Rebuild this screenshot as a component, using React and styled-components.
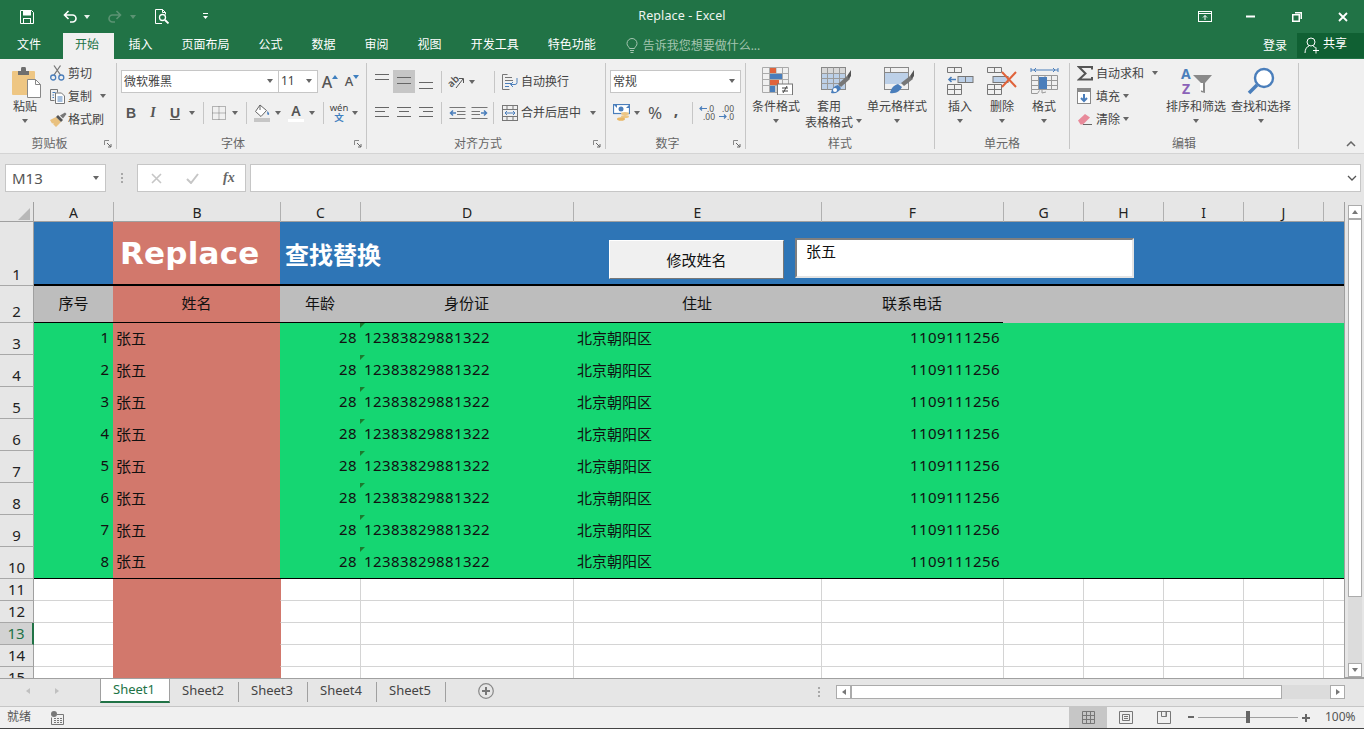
import React from 'react';
import styled, { createGlobalStyle } from 'styled-components';

const GlobalStyle = createGlobalStyle`
  html, body { margin: 0; padding: 0; overflow: hidden; }
  body { font-family: "Noto Sans", "Noto Sans CJK SC", sans-serif; font-size: 12px; color: #444; }
`;

const App_ = styled.div`
  width: 1364px;
  height: 729px;
  display: flex;
  flex-direction: column;
  overflow: hidden;
`;

// Barra de título
const TitleBar = styled.div`
  height: 33px;
  background: #217346;
  display: grid;
  grid-template-columns: 1fr auto 1fr;
  align-items: center;
  color: #fff;
`;
const Qat = styled.div`display: flex; align-items: center; padding-left: 20px;`;
const QatSlot = styled.div`
  width: ${p => p.$w}px;
  margin-left: ${p => p.$ml || 0}px;
  display: flex;
  align-items: center;
`;
const WhiteCaret = styled.span`
  width: 0; height: 0;
  border: 3.5px solid transparent;
  border-top: 4px solid ${p => p.$dim ? '#5b9373' : '#e8f0eb'};
  border-bottom: 0;
`;
const Title = styled.div`font-size: 12.5px; color: #eef4f0; letter-spacing: 0.1px; padding-bottom: 2px;`;
const WinButtons = styled.div`display: flex; justify-content: flex-end; align-items: center; margin-right: -1.5px;`;
const WinSlot = styled.div`
  width: ${p => p.$w}px;
  display: flex;
  justify-content: center;
`;

// Abas
const TabStrip = styled.div`
  height: 26px;
  background: #217346;
  display: flex;
  align-items: stretch;
  color: #fff;
  font-size: 12px;
  padding-left: 2.5px;
`;
const RibbonTab = styled.div`
  padding: ${p => p.$active ? '0 15px 0 12px' : '0 14.5px'};
  margin-left: ${p => p.$active ? '7.5px' : 0};
  background: ${p => p.$active ? '#f0f0f0' : 'transparent'};
  color: ${p => p.$active ? '#217346' : '#fff'};
  line-height: 24px;
`;
const TellMe = styled.div`
  display: flex;
  align-items: center;
  gap: 5px;
  margin: 0 0 2px 15.5px;
  color: #a4c5b0;
`;
const SignIn = styled.div`margin-left: auto; margin-right: 10px; line-height: 25px;`;
const Share = styled.div`
  width: 67px;
  height: 25px;
  background: #106033;
  display: flex;
  align-items: center;
  gap: 3px;
  padding-left: 7px;
  box-sizing: border-box;
  & span { padding-bottom: 5px; }
`;

// Faixa de opções
const Ribbon = styled.div`
  height: 95px;
  box-sizing: border-box;
  background: #f0f0f0;
  border-bottom: 1px solid #d4d4d4;
  display: flex;
  padding-top: 4px;
  position: relative;
`;
const Group = styled.div`
  width: ${p => p.$w}px;
  height: 86px;
  box-sizing: border-box;
  border-right: 1px solid #c6c6c6;
  position: relative;
  display: flex;
  flex-direction: column;
`;
const GroupBody = styled.div`
  height: 72px;
  display: flex;
  padding-left: ${p => p.$pl || 0}px;
`;
const Stack = styled.div`
  display: flex;
  flex-direction: column;
  padding-top: 7px;
  gap: 8px;
`;
const GroupLabel = styled.div`
  height: 14px;
  line-height: 18px;
  text-align: center;
  color: #666;
  padding-right: ${p => p.$pr || 0}px;
`;
const Launcher = styled.div`
  position: absolute;
  right: 4px;
  bottom: 1px;
  line-height: 0;
`;
const Collapse = styled.div`
  position: absolute;
  left: 1346px;
  top: 82px;
  line-height: 0;
`;
const ToolRow = styled.div`
  height: 23px;
  display: flex;
  align-items: center;
`;
const Slot = styled.div`
  width: ${p => p.$w}px;
  height: ${p => p.$h || 23}px;
  flex: none;
  display: flex;
  align-items: center;
  justify-content: center;
  background: ${p => p.$on ? '#c6c6c6' : 'transparent'};
`;
const Sep = styled.div`
  width: 1px;
  height: 22px;
  flex: none;
  background: #c6c6c6;
  margin: 0 ${p => p.$mr}px 0 ${p => p.$ml}px;
`;
const Caret = styled.span`
  display: inline-block;
  flex: none;
  width: 0; height: 0;
  border: 3.5px solid transparent;
  border-top: 4px solid #666;
  border-bottom: 0;
  margin-left: ${p => p.$ml || 0}px;
`;
const Combo = styled.div`
  width: ${p => p.$w}px;
  height: 23px;
  box-sizing: border-box;
  background: #fff;
  border: 1px solid #c6c6c6;
  margin-left: ${p => p.$ml || 0}px;
  padding: 0 5px 2px 2px;
  display: flex;
  align-items: center;
  justify-content: space-between;
`;
const BigButton = styled.div`
  width: ${p => p.$w}px;
  margin-left: ${p => p.$ml || 0}px;
  flex: none;
  display: flex;
  flex-direction: column;
  align-items: center;
  position: relative;
`;
const BigIcon = styled.div`
  height: 32px;
  padding-top: 4px;
  line-height: 0;
  margin-left: ${p => p.$ml || 0}px;
`;
const BigText = styled.div`line-height: 16px; height: 16px; white-space: nowrap;`;
const BigCaret = styled.div`height: 16px; margin-top: -2px; display: flex; align-items: center;`;
const SideCaret = styled.span`position: absolute; left: 51.5px; top: 56px; line-height: 0;`;
const SmallCol = styled.div`
  display: flex;
  flex-direction: column;
  margin-top: -1.5px;
  padding-left: ${p => p.$pl || 0}px;
  width: ${p => p.$w}px;
  box-sizing: border-box;
`;
const SmallItem = styled.div`height: 23px; display: flex; align-items: center;`;
const SmallIcon = styled.div`
  width: ${p => p.$w || 18}px;
  flex: none;
  line-height: 0;
`;
const ToolText = styled.span`white-space: nowrap; padding-bottom: 2px; margin-left: ${p => p.$ml || 0}px;`;
const StyleLetter = styled.span`
  font-family: ${p => p.$i ? '"Liberation Serif", serif' : '"Liberation Sans", sans-serif'};
  font-style: ${p => p.$i ? 'italic' : 'normal'};
  font-weight: 700;
  font-size: 14px;
  text-decoration: ${p => p.$u ? 'underline' : 'none'};
  color: #555;
`;
const BigA = styled.span`font-size: ${p => p.$s}px; font-weight: 500; color: #555; line-height: 1;`;
const GrowMark = styled.span`
  width: 0; height: 0;
  margin: -10px 0 0 0;
  border: 3px solid transparent;
  ${p => p.$down ? 'border-top: 4px solid #3f7fbf; border-bottom: 0;' : 'border-bottom: 4px solid #3f7fbf; border-top: 0;'}
`;
const FontColorA = styled.div`
  width: 16px;
  text-align: center;
  font-size: 14px;
  font-weight: 600;
  line-height: 16px;
  color: #555;
  border-bottom: 3px solid #fff;
`;
const Pinyin = styled.div`
  display: flex;
  flex-direction: column;
  align-items: center;
  font-size: 9.5px;
  line-height: 10px;
  color: #444;
  & b { color: #3f7fbf; font-weight: 700; }
`;
const Percent = styled.span`font-size: 17px; color: #555;`;
const Comma = styled.span`font-size: 16px; font-weight: 700; color: #555; margin-top: -6px;`;

// Barra de fórmulas
const FormulaBar = styled.div`
  height: 48px;
  box-sizing: border-box;
  background: #e6e6e6;
  padding: 10px 3px 10px 5px;
  display: flex;
`;
const NameBox = styled.div`
  width: 101px;
  height: 28px;
  box-sizing: border-box;
  background: #fff;
  border: 1px solid #c6c6c6;
  display: flex;
  align-items: center;
  justify-content: space-between;
  padding: 0 6px;
  font-size: 15px;
  color: #555;
`;
const Dots = styled.div`
  width: ${p => p.$w}px;
  display: flex;
  flex-direction: column;
  align-items: center;
  justify-content: center;
  gap: 2px;
  & i { width: 2px; height: 2px; background: #a8a8a8; }
`;
const SheetDots = styled(Dots)`
  height: 14px;
  margin: 6px 15px 0 auto;
`;
const FxBox = styled.div`
  width: 109px;
  height: 28px;
  box-sizing: border-box;
  background: #fff;
  border: 1px solid #c6c6c6;
  display: flex;
  align-items: center;
  padding-left: 13px;
  gap: 24px;
`;
const Fx = styled.span`
  font-family: "Liberation Serif", serif;
  font-style: italic;
  font-weight: 700;
  font-size: 14px;
  color: #666;
`;
const FormulaInput = styled.div`
  flex: 1;
  height: 28px;
  margin-left: 4px;
  box-sizing: border-box;
  background: #fff;
  border: 1px solid #c6c6c6;
  display: flex;
  align-items: center;
  justify-content: flex-end;
  padding-right: 3px;
`;

// Planilha
const COLS = '34px 79px 167px 80px 213px 248px 182px 80px 80px 80px 80px 21px';
const Main = styled.div`
  height: 476px;
  display: flex;
  background: #e6e6e6;
`;
const Sheet = styled.div`
  width: 1344px;
  height: 476px;
  overflow: hidden;
  position: relative;
`;
const HeaderRow = styled.div`
  display: grid;
  grid-template-columns: ${COLS};
  height: 20px;
  box-sizing: border-box;
  border-bottom: 1px solid #a0a0a0;
  background: #e6e6e6;
`;
const Corner = styled.div`
  position: relative;
  border-right: 1px solid #a0a0a0;
  &::after {
    content: '';
    position: absolute;
    right: 3px;
    bottom: 3px;
    border-left: 12px solid transparent;
    border-bottom: 12px solid #b8b8b8;
  }
`;
const ColHead = styled.div`
  text-align: center;
  font-size: 14px;
  line-height: 21px;
  color: #222;
  border-left: ${p => p.$first ? 0 : '1px solid #b0b0b0'};
`;
const Row = styled.div`
  display: grid;
  grid-template-columns: ${COLS};
  grid-template-rows: minmax(0, 1fr);
  height: ${p => p.$h}px;
  box-sizing: border-box;
  position: relative;
`;
const RowHead = styled.div`
  background: ${p => p.$sel ? '#d2d2d2' : '#e6e6e6'};
  color: ${p => p.$sel ? '#217346' : '#222'};
  border-right: ${p => p.$sel ? '2px solid #217346' : '1px solid #a0a0a0'};
  border-bottom: 1px solid #a8a8a8;
  box-sizing: border-box;
  display: flex;
  align-items: flex-end;
  justify-content: center;
  font-size: 15px;
  line-height: 21px;
`;
const Cell = styled.div`
  background: ${p => p.$bg};
  color: #111;
  font-size: 15px;
  display: flex;
  align-items: center;
  white-space: nowrap;
  box-sizing: border-box;
  justify-content: ${p => p.$right ? 'flex-end' : p.$center ? 'center' : 'flex-start'};
  padding-left: ${p => p.$right || p.$center ? 0 : p.$pl || 3}px;
  padding-right: ${p => p.$right ? p.$pr || 3 : 0}px;
  padding-bottom: ${p => p.$pb ?? 4}px;
  letter-spacing: ${p => p.$num ? '0.42px' : 0};
  border-bottom: ${p => p.$line ? `${p.$line}px solid #000` : 0};
  position: relative;
`;
const TextCell = styled(Cell)`
  &::before {
    content: '';
    position: absolute;
    left: 0;
    top: 0;
    border-right: 5px solid transparent;
    border-top: 5px solid #1c7a2e;
  }
`;
const GridCell = styled.div`
  background: ${p => p.$bg || '#fff'};
  border-left: ${p => p.$edge ? `1px solid ${p.$edge}` : 0};
  border-bottom: ${p => p.$bg ? 0 : '1px solid #d4d4d4'};
  box-sizing: border-box;
`;
const BigTitle = styled.span`
  font-family: "DejaVu Sans", sans-serif;
  font-weight: 700;
  font-size: 31px;
  letter-spacing: 0.2px;
  margin-left: -1px;
  color: #fff;
`;
const SubTitle = styled.span`
  font-family: "Liberation Sans", "Noto Sans CJK SC", sans-serif;
  font-weight: 700;
  font-size: 24px;
  color: #fff;
  position: relative;
  z-index: 1;
`;
const ControlButton = styled.div`
  position: absolute;
  left: 609px;
  top: 18px;
  width: 175px;
  height: 39px;
  box-sizing: border-box;
  background: #f0f0f0;
  border: 1px solid;
  border-color: #fff #777 #777 #fff;
  display: flex;
  align-items: center;
  justify-content: center;
  font-size: 15px;
  color: #111;
`;
const ControlInput = styled.div`
  position: absolute;
  left: 795px;
  top: 16px;
  width: 339px;
  height: 40px;
  box-sizing: border-box;
  background: #fff;
  border: 2px solid;
  border-color: #7f7f7f #e4e4e4 #e4e4e4 #7f7f7f;
  padding: 0 0 0 9px;
  font-size: 15px;
  color: #111;
`;

// Barra de rolagem vertical
const VScroll = styled.div`
  width: 20px;
  box-sizing: border-box;
  border-left: 1px solid #a0a0a0;
  border-bottom: 1px solid #a0a0a0;
  display: flex;
  flex-direction: column;
  align-items: center;
  padding-top: 3px;
`;
const ScrollTrack = styled.div`
  width: 14px;
  flex: 1;
  background: #dcdcdc;
  display: flex;
  flex-direction: column;
`;
const ScrollBtn = styled.div`
  width: ${p => p.$w || 14}px;
  height: ${p => p.$h || 14}px;
  flex: none;
  box-sizing: border-box;
  background: #fff;
  border: 1px solid #ababab;
  display: flex;
  align-items: center;
  justify-content: center;
`;
const VThumb = styled.div`
  height: 378px;
  box-sizing: border-box;
  background: #fff;
  border: 1px solid #ababab;
  margin-bottom: auto;
`;
const Tri = styled.span`
  width: 0; height: 0;
  border: ${p => p.$s || 3.5}px solid transparent;
  ${p => p.$dir === 'up' && `border-bottom: 4px solid ${p.$c || '#777'}; border-top: 0;`}
  ${p => p.$dir === 'down' && `border-top: 4px solid ${p.$c || '#777'}; border-bottom: 0;`}
  ${p => p.$dir === 'left' && `border-right: 4px solid ${p.$c || '#777'}; border-left: 0;`}
  ${p => p.$dir === 'right' && `border-left: 4px solid ${p.$c || '#777'}; border-right: 0;`}
`;

// Abas das planilhas
const SheetBar = styled.div`
  height: 28px;
  box-sizing: border-box;
  background: #e6e6e6;
  border-top: 1px solid #a0a0a0;
  display: flex;
  align-items: flex-start;
`;
const SheetNav = styled.div`
  width: 100px;
  height: 23px;
  display: flex;
  align-items: center;
  padding-left: 26px;
  gap: 25px;
  box-sizing: border-box;
`;
const SheetTab = styled.div`
  width: ${p => p.$active ? 70 : 69}px;
  height: ${p => p.$active ? 24 : 20}px;
  margin-top: ${p => p.$active ? 0 : 3}px;
  padding-right: 2px;
  box-sizing: border-box;
  background: ${p => p.$active ? '#fff' : 'transparent'};
  color: ${p => p.$active ? '#217346' : '#444'};
  border-left: ${p => p.$active ? '1px solid #a0a0a0' : 0};
  border-right: 1px solid #a0a0a0;
  border-bottom: ${p => p.$active ? '2px solid #217346' : 0};
  text-align: center;
  font-size: 13px;
  line-height: ${p => p.$active ? 21 : 16}px;
`;
const AddSheet = styled.div`margin: 4px 0 0 32px; line-height: 0;`;
const HScroll = styled.div`
  width: 509px;
  height: 14px;
  margin: 6px 19px 0 0;
  background: #dcdcdc;
  display: flex;
`;
const HThumb = styled.div`
  width: 431px;
  box-sizing: border-box;
  background: #fff;
  border: 1px solid #ababab;
  margin-right: auto;
`;

// Barra de status
const StatusBar = styled.div`
  height: 23px;
  box-sizing: border-box;
  background: #f0f0f0;
  border-top: 1px solid #c6c6c6;
  border-bottom: 1px solid #444;
  display: flex;
  align-items: stretch;
  padding-left: 7px;
  color: #555;
`;
const StatusText = styled.div`line-height: 20px;`;
const MacroSlot = styled.div`
  margin-left: 20px;
  display: flex;
  align-items: center;
`;
const StatusRight = styled.div`margin-left: auto; display: flex; align-items: stretch;`;
const ViewBtn = styled.div`
  width: 38px;
  display: flex;
  align-items: center;
  justify-content: center;
  background: ${p => p.$on ? '#c6c6c6' : 'transparent'};
`;
const Zoom = styled.div`
  display: flex;
  align-items: center;
  margin-left: 5px;
`;
const Slider = styled.div`
  width: 100px;
  height: 1px;
  margin: 0 4px;
  background: #a0a0a0;
  position: relative;
  &::after {
    content: '';
    position: absolute;
    left: 48px;
    top: -6px;
    width: 4px;
    height: 12px;
    background: #666;
  }
`;
const ZoomValue = styled.div`width: 32px; margin: 0 7px 0 15px; line-height: 20px;`;

// Ícones
const Svg = ({ w, h, children, ...rest }) => (
  <svg width={w} height={h} viewBox={`0 0 ${w} ${h}`} fill="none" {...rest}>{children}</svg>
);
const BLUE = '#4a7ebb';
const LB = '#bcd0e8';
const RED = '#e0633b';

const SaveIcon = () => (
  <Svg w={14} h={14}>
    <path d="M.5.5h11l2 2v11H.5z" stroke="#fff" />
    <rect x="3" y="1" width="8" height="4.5" fill="#fff" />
    <rect x="3.5" y="8.5" width="7" height="5" stroke="#fff" />
  </Svg>
);
const UndoIcon = ({ color = '#fff', flip }) => (
  <Svg w={15} h={13} style={flip ? { transform: 'scaleX(-1)' } : undefined}>
    <path d="M5.5 1 1.500 5l4 4M1.500 5h8a3.500 3.500 0 0 1 0 7H7" stroke={color} strokeWidth="1.600" />
  </Svg>
);
const PreviewIcon = () => (
  <Svg w={15} h={15}>
    <path d="M7 14.500H.5V.5h7l3 3v2M7.500.5v3h3" stroke="#fff" />
    <circle cx="7.500" cy="8.500" r="3" stroke="#fff" strokeWidth="1.300" />
    <path d="m10 11 3.500 3.500" stroke="#fff" strokeWidth="1.800" />
  </Svg>
);
const CustomizeIcon = () => (
  <Svg w={7} h={7}>
    <path d="M1 .5h5" stroke="#fff" />
    <path d="M1 3h5L3.500 6z" fill="#fff" />
  </Svg>
);
const DisplayIcon = () => (
  <Svg w={14} h={11}>
    <rect x=".5" y=".5" width="13" height="10" stroke="#fff" />
    <path d="M1 2.500h12" stroke="#fff" />
    <path d="M7 9V4.500M5 6.500l2-2 2 2" stroke="#fff" />
  </Svg>
);
const MinIcon = () => <Svg w={9} h={3}><rect width="9" height="2" y=".5" fill="#fff" /></Svg>;
const RestoreIcon = () => (
  <Svg w={10} h={10}>
    <rect x=".75" y="2.750" width="6.500" height="6.500" stroke="#fff" strokeWidth="1.500" />
    <path d="M3 .75h6.250V7" stroke="#fff" strokeWidth="1.500" />
  </Svg>
);
const CloseIcon = () => <Svg w={10} h={10}><path d="m1 1 8 8M9 1 1 9" stroke="#fff" strokeWidth="1.800" /></Svg>;
const BulbIcon = () => (
  <Svg w={12} h={15}>
    <path d="M3.500 10.500C3 8.500 1 8 1 5.500a5 5 0 0 1 10 0c0 2.500-2 3-2.500 5z" stroke="#a4c5b0" />
    <path d="M4 12.500h4M4.500 14.500h3" stroke="#a4c5b0" />
  </Svg>
);
const PersonIcon = () => (
  <Svg w={16} h={17}>
    <circle cx="7" cy="5" r="4" stroke="#fff" />
    <path d="M1 16c0-4 2-6.500 4-7M9 9c1 .3 2 1 2.500 2" stroke="#fff" />
    <path d="M9 13.500h6M12 10.500v6" stroke="#fff" />
  </Svg>
);
const PasteIcon = () => (
  <Svg w={30} h={31}>
    <rect x="0" y="4" width="23" height="24" rx="1" fill="#eec683" />
    <path d="M6 4h3V2a2 2 0 0 1 5 0v2h3v4H6z" fill="#6f6f6f" />
    <path d="M15.500 12.500h8l5 5v13h-13z" fill="#fff" stroke="#888" />
    <path d="M23.500 12.500v5h5" stroke="#888" />
  </Svg>
);
const ScissorsIcon = () => (
  <Svg w={15} h={16}>
    <path d="M4 10 10.500 .5M10.500 10 4 .5" stroke="#777" strokeWidth="1.300" />
    <circle cx="3.200" cy="12.500" r="2.500" stroke={BLUE} strokeWidth="1.300" />
    <circle cx="11.300" cy="12.500" r="2.500" stroke={BLUE} strokeWidth="1.300" />
  </Svg>
);
const CopyIcon = () => (
  <Svg w={15} h={15}>
    <path d="M4.500 11.500H.5V.5h7v3" stroke="#777" />
    <path d="M5.500 4h6l3 3v7.500h-9z" fill="#fff" stroke="#777" />
    <path d="M2.500 3.500h3M2.500 6h1.500M2.500 8.500h1.500M7.500 8h5M7.500 10h5M7.500 12h5" stroke={BLUE} />
  </Svg>
);
const PainterIcon = () => (
  <Svg w={17} h={15}>
    <path d="M0 8 6 5l5 5-5 5-3-3 1-1-2 .5z" fill="#e9c17f" />
    <path d="m6 5 5 5 2-2-5-5z" fill="#555" />
    <path d="m10 3.500 3 3L16.500 2 15 .5z" fill="#777" />
  </Svg>
);
const BorderIcon = () => (
  <Svg w={14} h={14}>
    <path d="M.5.5h13v13H.5zM7 .5v13M.5 7h13" stroke="#777" strokeDasharray="1 1" />
  </Svg>
);
const BucketIcon = () => (
  <Svg w={17} h={18}>
    <path d="M6 1 1.500 7.500 7 12.500 12.500 6.500z" fill="#fff" stroke="#666" />
    <path d="M6 1v5" stroke="#666" />
    <path d="M13.500 7c1.500 2 2 3 1.500 3.600-1 .8-2.500 0-1.500-3.600z" fill={BLUE} />
    <rect y="14" width="16" height="4" fill="#c6c6c6" />
  </Svg>
);
const LinesIcon = ({ lines }) => (
  <Svg w={14} h={16}>
    {lines.map((r, i) => (
      <path key={i} d={`M${r[0]} ${r[2]}h${r[1]}`} stroke="#666" />
    ))}
  </Svg>
);
const OrientIcon = () => (
  <Svg w={18} h={18} overflow="visible">
    <text x="1" y="13" fontSize="10" fontFamily="Noto Sans" fontWeight="600" fill="#555" transform="rotate(-45 5 10)">ab</text>
    <path d="M9 15 16 6M12 5.500h4.500V10" stroke="#555" />
  </Svg>
);
const WrapIcon = () => (
  <Svg w={16} h={16}>
    <path d="M5.500 .5H.5v15h7" stroke="#777" />
    <path d="M3 3.500h7M3 6.500h8" stroke="#777" />
    <path d="M3 9.500h7M3 12.500h4" stroke={BLUE} />
    <path d="M15 4v4.500a2 2 0 0 1-2 2H9M11 8 8.500 10.500 11 13" stroke={BLUE} />
  </Svg>
);
const MergeIcon = () => (
  <Svg w={16} h={16}>
    <rect x=".5" y=".5" width="15" height="15" stroke="#777" />
    <path d="M.5 4.500h15M.5 11.500h15M5 .5v4M11 .5v4M5 11.500v4M11 11.500v4" stroke="#777" />
    <path d="M3 8h10M5 6 3 8l2 2M11 6l2 2-2 2" stroke={BLUE} />
  </Svg>
);
const IndentIcon = ({ flip }) => (
  <Svg w={17} h={12} style={flip ? { transform: 'scaleX(-1)' } : undefined}>
    <path d="M.5.5h16M8 4.500h8.500M8 7.500h8.500M.5 11.500h16" stroke="#777" />
    <path d="M7 6H1.500M4 3.500 1.500 6 4 8.500" stroke={BLUE} strokeWidth="1.500" />
  </Svg>
);
const CurrencyIcon = () => (
  <Svg w={17} h={17}>
    <rect x=".5" y=".5" width="16" height="9" fill="#fff" stroke={BLUE} strokeWidth="1.200" />
    <circle cx="8" cy="5" r="2.500" fill={BLUE} />
    <path d="M0 0h4v4zM17 0v4h-4z" fill={BLUE} />
    <ellipse cx="12" cy="9.500" rx="4" ry="1.500" fill="#eec683" />
    <ellipse cx="12" cy="12.500" rx="4" ry="1.500" fill="#eec683" />
    <ellipse cx="8" cy="15" rx="4" ry="1.800" fill="#e9b765" />
  </Svg>
);
const DecimalIcon = ({ more }) => (
  <Svg w={17} h={15} overflow="visible">
    <text x={more ? 3 : 7} y="6.500" fontSize="8.500" fontFamily="Noto Sans" fill="#555">{more ? '.00' : '.0'}</text>
    <text x={more ? 8 : 3} y="14.500" fontSize="8.500" fontFamily="Noto Sans" fill="#555">{more ? '.0' : '.00'}</text>
    {more
      ? <path d="M0 11.500h7M5 9.500l2 2-2 2" stroke={BLUE} strokeWidth="1.200" />
      : <path d="M7 3.500H0M2 1.500l-2 2 2 2" stroke={BLUE} strokeWidth="1.200" />}
  </Svg>
);
const CondIcon = () => (
  <Svg w={31} h={28}>
    <path d="M.5.5h26v25H.5zM.5 6.500h26M.5 12.500h26M.5 18.500h26M7.500.5v25M14 .5v25M20.500.5v25" stroke="#aaa" />
    <rect x="8" y="1" width="6" height="5" fill={RED} />
    <rect x="8" y="7" width="12" height="5" fill={BLUE} />
    <rect x="8" y="13" width="9" height="5" fill={RED} />
    <rect x="8" y="19" width="5" height="6" fill={BLUE} />
    <rect x="15.500" y="17" width="15" height="11" fill="#fff" stroke="#777" />
    <path d="M20 21h6M20 24h6M25 19l-4 7" stroke="#444" />
  </Svg>
);
const TableIcon = () => (
  <Svg w={31} h={28}>
    <rect x=".5" y=".5" width="24" height="22" stroke="#888" />
    <rect x="1" y="1" width="23" height="5" fill="#d8d8d8" />
    <rect x="1" y="7" width="23" height="15" fill={LB} />
    <path d="M.5 6.500h24M.5 11.500h24M.5 16.500h24M6.500.5v22M12.500.5v22M18.500.5v22" stroke="#9a9a9a" />
    <path d="M17 17l9-8 3 3-9 8z" fill="#777" />
    <path d="M26 9l4-6v6l-2 3z" fill="#555" />
    <path d="M10 26c1-5 3-7 7-8l3 3c-2 4-5 6-10 5z" fill={BLUE} />
    <circle cx="14" cy="23" r="2" fill="#fff" />
  </Svg>
);
const CellStyleIcon = () => (
  <Svg w={31} h={28}>
    <rect x=".5" y=".5" width="24" height="22" stroke="#888" />
    <rect x="1" y="6" width="23" height="11" fill={LB} />
    <path d="M.5 5.500h24M6.500.5v5" stroke="#888" />
    <path d="M17 16l9-7 3 3-9 7z" fill="#777" />
    <path d="M26 9l4-6v6l-2 3z" fill="#555" />
    <path d="M6 26c1-5 4-8 8-9l4 3c-2 4-6 7-12 6z" fill={BLUE} />
  </Svg>
);
const InsertIcon = () => (
  <Svg w={27} h={28}>
    <path d="M.5.5h14v5H.5zM7.500.5v5M.5 17.500h14v10H.5zM7.500 17.500v10M.5 22.500h14" stroke="#777" />
    <rect x="11" y="9.500" width="15" height="6" fill={LB} stroke="#777" />
    <path d="M18.500 9.500v6" stroke="#777" />
    <path d="M9 12.500H2M4.500 10 2 12.500 4.500 15" stroke={BLUE} strokeWidth="1.600" />
  </Svg>
);
const DeleteIcon = () => (
  <Svg w={31} h={28}>
    <path d="M.5.500h14v5H.5zM7.500.500v5M.5 17.500h14v10H.5zM7.500 17.500v10M.5 22.500h14" stroke="#777" />
    <rect x="6" y="9.500" width="15" height="6" fill={LB} stroke="#777" />
    <path d="M15 5 29 20M29 5 15 20" stroke={RED} strokeWidth="2" />
  </Svg>
);
const FormatIcon = () => (
  <Svg w={29} h={28}>
    <path d="M1 3h27M1 1v4M28 1v4M4 3l2-2M4 3l2 2M25 3l-2-2M25 3l-2 2" stroke={BLUE} />
    <path d="M1.500 8.500h26v14h-26zM1.500 13.500h26M1.500 18.500h26M8.500 8.500v14M15 8.500v14M21.500 8.500v14" stroke="#999" />
    <rect x="9" y="10" width="8" height="12" fill={BLUE} />
    <path d="M1.500 22.500v4h6l2-3M12 23v3l4-1" stroke="#999" />
  </Svg>
);
const SigmaIcon = () => (
  <Svg w={16} h={15}>
    <path d="M15 3.500V1H2l6.500 6.500L2 13.500h13V11" stroke="#555" strokeWidth="2" />
  </Svg>
);
const FillIcon = () => (
  <Svg w={14} h={16}>
    <rect x=".5" y=".5" width="13" height="15" fill="#fff" stroke="#888" />
    <rect x="1" y="1" width="12" height="3" fill="#888" />
    <path d="M7 6v7M4 10l3 3 3-3" stroke={BLUE} strokeWidth="2" />
  </Svg>
);
const EraserIcon = () => (
  <Svg w={15} h={14}>
    <path d="M1 8.500 8 2l5 3.500L6 12.500H3.500z" fill="#e88a9a" />
    <path d="M6 12.500h9" stroke="#666" />
  </Svg>
);
const SortIcon = () => (
  <Svg w={31} h={28} overflow="visible">
    <text x="0" y="12" fontSize="14" fontFamily="Noto Sans" fontWeight="700" fill={BLUE}>A</text>
    <text x="1" y="27" fontSize="14" fontFamily="Noto Sans" fontWeight="700" fill="#8b62b8">Z</text>
    <path d="M12 8h19l-7 8v10l-4-1V16z" fill="#8a8a8a" />
    <path d="M19 16v7l3 1v-8" fill="#fff" />
  </Svg>
);
const FindIcon = () => (
  <Svg w={28} h={28}>
    <circle cx="17" cy="11" r="9" stroke={BLUE} strokeWidth="2.400" fill="#fff" />
    <path d="M10 18 2 26" stroke={BLUE} strokeWidth="3.600" />
  </Svg>
);
const LauncherIcon = () => (
  <Svg w={8} h={8}>
    <path d="M.5 5V.5H5" stroke="#888" />
    <path d="m3 3 4 4M7 4v3H4" stroke="#666" />
  </Svg>
);
const Cross = () => <Svg w={11} h={11}><path d="m1 1 9 9M10 1l-9 9" stroke="#c6c6c6" strokeWidth="1.600" /></Svg>;
const Check = () => <Svg w={13} h={11}><path d="m1 6 4 4 7-9" stroke="#c6c6c6" strokeWidth="2" /></Svg>;
const Chevron = () => <Svg w={10} h={6}><path d="m1 1 4 4 4-4" stroke="#555" strokeWidth="1.300" /></Svg>;
const MacroIcon = () => (
  <Svg w={13} h={14}>
    <circle cx="3" cy="3" r="3" fill="#777" />
    <path d="M.5 6.500v7h12v-10H6" stroke="#777" />
    <path d="M3 7.500h8M3 9.500h8M3 11.500h8" stroke="#777" strokeDasharray="2 1" />
  </Svg>
);
const NormalView = () => <Svg w={13} h={13}><path d="M.5.5h12v12H.5zM4.500.5v12M8.500.5v12M.5 4.500h12M.5 8.500h12" stroke="#777" /></Svg>;
const PageView = () => (
  <Svg w={14} h={13}>
    <path d="M.5.5h13v12H.5z" stroke="#777" />
    <path d="M3.500 3.500h7v6h-7zM5 5.500h4M5 7.500h4" stroke="#777" />
  </Svg>
);
const BreakView = () => <Svg w={14} h={13}><path d="M.5.5h13v12H.5zM4.500.5v5h5V.5M9 .5v5" stroke="#777" /></Svg>;
const PlusCircle = () => (
  <Svg w={16} h={16}>
    <circle cx="8" cy="8" r="7.300" stroke="#888" strokeWidth="1.200" />
    <path d="M4 8h8M8 4v8" stroke="#777" strokeWidth="2" />
  </Svg>
);

const tabs = ['插入', '页面布局', '公式', '数据', '审阅', '视图', '开发工具', '特色功能'];
const colLetters = ['A', 'B', 'C', 'D', 'E', 'F', 'G', 'H', 'I', 'J', ''];
const people = [1, 2, 3, 4, 5, 6, 7, 8];
const GREEN = '#15d672';
const SALMON = '#d2786c';
const GRAY = '#bdbdbd';
const BLUEBAND = '#2e75b6';

export default function App() {
  return (
    <App_>
      <GlobalStyle />
      <TitleBar>
        <Qat>
          <QatSlot $w={43}><SaveIcon /></QatSlot>
          <QatSlot $w={21}><UndoIcon /></QatSlot>
          <QatSlot $w={23}><WhiteCaret /></QatSlot>
          <QatSlot $w={23}><UndoIcon flip color="#5b9373" /></QatSlot>
          <QatSlot $w={25}><WhiteCaret $dim /></QatSlot>
          <QatSlot $w={47}><PreviewIcon /></QatSlot>
          <QatSlot $w={10}><CustomizeIcon /></QatSlot>
        </Qat>
        <Title>Replace - Excel</Title>
        <WinButtons>
          <WinSlot $w={46}><DisplayIcon /></WinSlot>
          <WinSlot $w={46}><MinIcon /></WinSlot>
          <WinSlot $w={46}><RestoreIcon /></WinSlot>
          <WinSlot $w={46}><CloseIcon /></WinSlot>
        </WinButtons>
      </TitleBar>

      <TabStrip>
        <RibbonTab>文件</RibbonTab>
        <RibbonTab $active>开始</RibbonTab>
        {tabs.map(t => <RibbonTab key={t}>{t}</RibbonTab>)}
        <TellMe><BulbIcon />告诉我您想要做什么...</TellMe>
        <SignIn>登录</SignIn>
        <Share><PersonIcon /><span>共享</span></Share>
      </TabStrip>

      <Ribbon>
        <Group $w={117}>
          <GroupBody>
            <BigButton $w={50}>
              <BigIcon $ml={3}><PasteIcon /></BigIcon>
              <BigText>粘贴</BigText>
              <BigCaret><Caret /></BigCaret>
            </BigButton>
            <SmallCol $w={66}>
              <SmallItem><SmallIcon><ScissorsIcon /></SmallIcon>剪切</SmallItem>
              <SmallItem><SmallIcon><CopyIcon /></SmallIcon>复制<Caret $ml={8} /></SmallItem>
              <SmallItem><SmallIcon><PainterIcon /></SmallIcon>格式刷</SmallItem>
            </SmallCol>
          </GroupBody>
          <GroupLabel $pr={17}>剪贴板</GroupLabel>
          <Launcher><LauncherIcon /></Launcher>
        </Group>

        <Group $w={250}>
          <GroupBody $pl={4}>
            <Stack>
              <ToolRow>
                <Combo $w={158}>微软雅黑<Caret /></Combo>
                <Combo $w={40} $ml={-1}>11<Caret /></Combo>
                <Slot $w={24}><BigA $s={16}>A</BigA><GrowMark /></Slot>
                <Slot $w={20}><BigA $s={13}>A</BigA><GrowMark $down /></Slot>
              </ToolRow>
              <ToolRow>
                <Slot $w={20}><StyleLetter>B</StyleLetter></Slot>
                <Slot $w={24}><StyleLetter $i>I</StyleLetter></Slot>
                <Slot $w={20}><StyleLetter $u>U</StyleLetter></Slot>
                <Slot $w={14}><Caret /></Slot>
                <Sep $ml={4} $mr={3} />
                <Slot $w={23}><BorderIcon /></Slot>
                <Slot $w={10}><Caret /></Slot>
                <Sep $ml={6} $mr={5} />
                <Slot $w={20}><BucketIcon /></Slot>
                <Slot $w={12}><Caret /></Slot>
                <Slot $w={24}><FontColorA>A</FontColorA></Slot>
                <Slot $w={8}><Caret /></Slot>
                <Sep $ml={7} $mr={6} />
                <Slot $w={18}><Pinyin>wén<b>文</b></Pinyin></Slot>
                <Slot $w={14}><Caret /></Slot>
              </ToolRow>
            </Stack>
          </GroupBody>
          <GroupLabel $pr={17}>字体</GroupLabel>
          <Launcher><LauncherIcon /></Launcher>
        </Group>

        <Group $w={239}>
          <GroupBody $pl={4}>
            <Stack>
              <ToolRow>
                <Slot $w={22}><LinesIcon lines={[[0, 14, .5], [0, 14, 5.5]]} /></Slot>
                <Slot $w={22} $on><LinesIcon lines={[[0, 14, 3.5], [0, 14, 9.5]]} /></Slot>
                <Slot $w={22}><LinesIcon lines={[[0, 14, 8.5], [0, 14, 14.5]]} /></Slot>
                <Sep $ml={4} $mr={3} />
                <Slot $w={22}><OrientIcon /></Slot>
                <Slot $w={10}><Caret /></Slot>
                <Sep $ml={17} $mr={7} />
                <SmallIcon $w={19}><WrapIcon /></SmallIcon>
                <ToolText>自动换行</ToolText>
              </ToolRow>
              <ToolRow>
                <Slot $w={22}><LinesIcon lines={[[0, 14, 2.5], [0, 10, 6.5], [0, 14, 11.5]]} /></Slot>
                <Slot $w={22}><LinesIcon lines={[[0, 14, 2.5], [2, 10, 6.5], [0, 14, 11.5]]} /></Slot>
                <Slot $w={22}><LinesIcon lines={[[0, 14, 2.5], [4, 10, 6.5], [0, 14, 11.5]]} /></Slot>
                <Sep $ml={4} $mr={3} />
                <Slot $w={24}><IndentIcon /></Slot>
                <Slot $w={20}><IndentIcon flip /></Slot>
                <Sep $ml={4} $mr={8} />
                <SmallIcon $w={19}><MergeIcon /></SmallIcon>
                <ToolText>合并后居中</ToolText>
                <Caret $ml={9} />
              </ToolRow>
            </Stack>
          </GroupBody>
          <GroupLabel $pr={16}>对齐方式</GroupLabel>
          <Launcher><LauncherIcon /></Launcher>
        </Group>

        <Group $w={140}>
          <GroupBody $pl={4}>
            <Stack>
              <ToolRow><Combo $w={131}>常规<Caret /></Combo></ToolRow>
              <ToolRow>
                <Slot $w={22}><CurrencyIcon /></Slot>
                <Slot $w={10}><Caret /></Slot>
                <Slot $w={26}><Percent>%</Percent></Slot>
                <Slot $w={16}><Comma>,</Comma></Slot>
                <Sep $ml={8} $mr={6} />
                <Slot $w={19}><DecimalIcon /></Slot>
                <Slot $w={19}><DecimalIcon more /></Slot>
              </ToolRow>
            </Stack>
          </GroupBody>
          <GroupLabel $pr={16}>数字</GroupLabel>
          <Launcher><LauncherIcon /></Launcher>
        </Group>

        <Group $w={189}>
          <GroupBody $pl={2}>
            <BigButton $w={56}>
              <BigIcon $ml={2}><CondIcon /></BigIcon>
              <BigText>条件格式</BigText>
              <BigCaret><Caret /></BigCaret>
            </BigButton>
            <BigButton $w={50}>
              <BigIcon $ml={14}><TableIcon /></BigIcon>
              <BigText>套用</BigText>
              <BigText>表格格式</BigText>
              <SideCaret><Caret /></SideCaret>
            </BigButton>
            <BigButton $w={68} $ml={9}>
              <BigIcon $ml={4}><CellStyleIcon /></BigIcon>
              <BigText>单元格样式</BigText>
              <BigCaret><Caret /></BigCaret>
            </BigButton>
          </GroupBody>
          <GroupLabel>样式</GroupLabel>
        </Group>

        <Group $w={135}>
          <GroupBody $pl={4}>
            <BigButton $w={42}>
              <BigIcon><InsertIcon /></BigIcon>
              <BigText>插入</BigText>
              <BigCaret><Caret /></BigCaret>
            </BigButton>
            <BigButton $w={42}>
              <BigIcon><DeleteIcon /></BigIcon>
              <BigText>删除</BigText>
              <BigCaret><Caret /></BigCaret>
            </BigButton>
            <BigButton $w={42}>
              <BigIcon><FormatIcon /></BigIcon>
              <BigText>格式</BigText>
              <BigCaret><Caret /></BigCaret>
            </BigButton>
          </GroupBody>
          <GroupLabel>单元格</GroupLabel>
        </Group>

        <Group $w={229}>
          <GroupBody>
            <SmallCol $w={95} $pl={7}>
              <SmallItem><SmallIcon $w={19}><SigmaIcon /></SmallIcon>自动求和<Caret $ml={8} /></SmallItem>
              <SmallItem><SmallIcon $w={19}><FillIcon /></SmallIcon>填充<Caret $ml={3} /></SmallItem>
              <SmallItem><SmallIcon $w={19}><EraserIcon /></SmallIcon>清除<Caret $ml={3} /></SmallItem>
            </SmallCol>
            <BigButton $w={62}>
              <BigIcon><SortIcon /></BigIcon>
              <BigText>排序和筛选</BigText>
              <BigCaret><Caret /></BigCaret>
            </BigButton>
            <BigButton $w={66} $ml={1}>
              <BigIcon><FindIcon /></BigIcon>
              <BigText>查找和选择</BigText>
              <BigCaret><Caret /></BigCaret>
            </BigButton>
          </GroupBody>
          <GroupLabel>编辑</GroupLabel>
        </Group>
        <Collapse>
          <Svg w={10} h={6}><path d="m1 5 4-4 4 4" stroke="#666" strokeWidth="1.500" /></Svg>
        </Collapse>
      </Ribbon>

      <FormulaBar>
        <NameBox>M13<Caret /></NameBox>
        <Dots $w={31}><i /><i /><i /></Dots>
        <FxBox>
          <Cross />
          <Check />
          <Fx>fx</Fx>
        </FxBox>
        <FormulaInput><Chevron /></FormulaInput>
      </FormulaBar>

      <Main>
        <Sheet>
          <HeaderRow>
            <Corner />
            {colLetters.map((c, i) => <ColHead key={i} $first={i === 0}>{c}</ColHead>)}
          </HeaderRow>

          <Row $h={64}>
            <RowHead>1</RowHead>
            <Cell $bg={BLUEBAND} $line={2} />
            <Cell $bg={SALMON} $line={2} $pl={8} $pb={0}><BigTitle>Replace</BigTitle></Cell>
            <Cell $bg={BLUEBAND} $line={2} $pl={5} $pb={0}><SubTitle>查找替换</SubTitle></Cell>
            {[1, 2, 3, 4, 5, 6, 7, 8].map(i => <Cell key={i} $bg={BLUEBAND} $line={2} />)}
            <ControlButton>修改姓名</ControlButton>
            <ControlInput>张五</ControlInput>
          </Row>

          <Row $h={37}>
            <RowHead>2</RowHead>
            <Cell $bg={GRAY} $center $line={1}>序号</Cell>
            <Cell $bg={SALMON} $center $line={1}>姓名</Cell>
            <Cell $bg={GRAY} $center $line={1}>年龄</Cell>
            <Cell $bg={GRAY} $center $line={1}>身份证</Cell>
            <Cell $bg={GRAY} $center $line={1}>住址</Cell>
            <Cell $bg={GRAY} $center $line={1}>联系电话</Cell>
            {[1, 2, 3, 4, 5].map(i => <Cell key={i} $bg={GRAY} />)}
          </Row>

          {people.map(n => {
            const last = n === 8 ? 1 : 0;
            return (
              <Row key={n} $h={32}>
                <RowHead>{n + 2}</RowHead>
                <Cell $bg={GREEN} $right $pr={4} $line={last}>{n}</Cell>
                <Cell $bg={SALMON} $pl={3} $line={last}>张五</Cell>
                <Cell $bg={GREEN} $right $num $line={last}>28</Cell>
                <TextCell $bg={GREEN} $pl={4} $num $line={last}>12383829881322</TextCell>
                <Cell $bg={GREEN} $pl={4} $line={last}>北京朝阳区</Cell>
                <Cell $bg={GREEN} $right $num $line={last}>1109111256</Cell>
                {[1, 2, 3, 4, 5].map(i => <Cell key={i} $bg={GREEN} $line={last} />)}
              </Row>
            );
          })}

          {[11, 12, 13, 14, 15].map(n => (
            <Row key={n} $h={22}>
              <RowHead $sel={n === 13}>{n}</RowHead>
              <GridCell />
              <GridCell $bg={SALMON} />
              <GridCell $edge={SALMON} />
              {[1, 2, 3, 4, 5, 6, 7, 8].map(i => <GridCell key={i} $edge="#d4d4d4" />)}
            </Row>
          ))}
        </Sheet>

        <VScroll>
          <ScrollBtn><Tri $dir="up" /></ScrollBtn>
          <ScrollTrack>
            <VThumb />
            <ScrollBtn><Tri $dir="down" /></ScrollBtn>
          </ScrollTrack>
        </VScroll>
      </Main>

      <SheetBar>
        <SheetNav>
          <Tri $dir="left" $c="#c0c0c0" />
          <Tri $dir="right" $c="#c0c0c0" />
        </SheetNav>
        <SheetTab $active>Sheet1</SheetTab>
        <SheetTab>Sheet2</SheetTab>
        <SheetTab>Sheet3</SheetTab>
        <SheetTab>Sheet4</SheetTab>
        <SheetTab>Sheet5</SheetTab>
        <AddSheet><PlusCircle /></AddSheet>
        <SheetDots $w={4}><i /><i /><i /></SheetDots>
        <HScroll>
          <ScrollBtn $w={15}><Tri $dir="left" /></ScrollBtn>
          <HThumb />
          <ScrollBtn $w={15}><Tri $dir="right" /></ScrollBtn>
        </HScroll>
      </SheetBar>

      <StatusBar>
        <StatusText>就绪</StatusText>
        <MacroSlot><MacroIcon /></MacroSlot>
        <StatusRight>
          <ViewBtn $on><NormalView /></ViewBtn>
          <ViewBtn><PageView /></ViewBtn>
          <ViewBtn><BreakView /></ViewBtn>
          <Zoom>
            <Svg w={6} h={3}><rect width="6" height="2" fill="#666" /></Svg>
            <Slider />
            <Svg w={8} h={8}><path d="M0 4h8M4 0v8" stroke="#666" strokeWidth="2" /></Svg>
          </Zoom>
          <ZoomValue>100%</ZoomValue>
        </StatusRight>
      </StatusBar>
    </App_>
  );
}
